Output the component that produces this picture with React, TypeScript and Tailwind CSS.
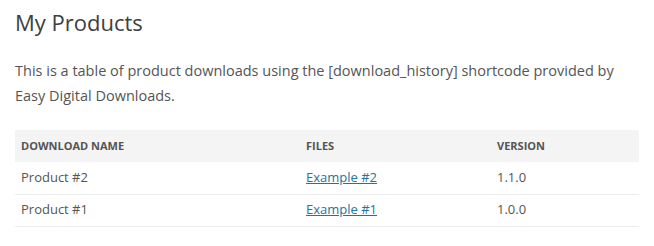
export default function App() {
  const rows = [
    { name: "Product #2", file: "Example #2", version: "1.1.0" },
    { name: "Product #1", file: "Example #1", version: "1.0.0" },
  ];
  return (
    <div className="w-[654px] h-[246px] bg-white px-[15px] pt-[6px]" style={{ fontFamily: '"Open Sans", sans-serif' }}>
      <h1 className="text-[22px] leading-[32px] text-[#404040] font-normal">My Products</h1>
      <p className="mt-[20px] text-[14.5px] leading-[25px] text-[#555] w-[610px]">
        This is a table of product downloads using the [download_history] shortcode provided by Easy Digital Downloads.
      </p>
      <table className="mt-[22px] w-[624px] border-collapse text-[13px] text-[#555]">
        <thead>
          <tr className="bg-[#f4f4f4] h-[32px]">
            <th className="w-[285px] text-left pl-[6px] text-[11px] font-bold uppercase text-[#555]">Download Name</th>
            <th className="w-[191px] text-left pl-[6px] text-[11px] font-bold uppercase text-[#555]">Files</th>
            <th className="text-left pl-[6px] text-[11px] font-bold uppercase text-[#555]">Version</th>
          </tr>
        </thead>
        <tbody>
          {rows.map((r) => (
            <tr key={r.name} className="h-[32px] border-b border-[#ececec]">
              <td className="pl-[6px]">{r.name}</td>
              <td className="pl-[6px]">
                <a href="#" className="text-[#21759b] underline">{r.file}</a>
              </td>
              <td className="pl-[6px]">{r.version}</td>
            </tr>
          ))}
        </tbody>
      </table>
    </div>
  );
}
